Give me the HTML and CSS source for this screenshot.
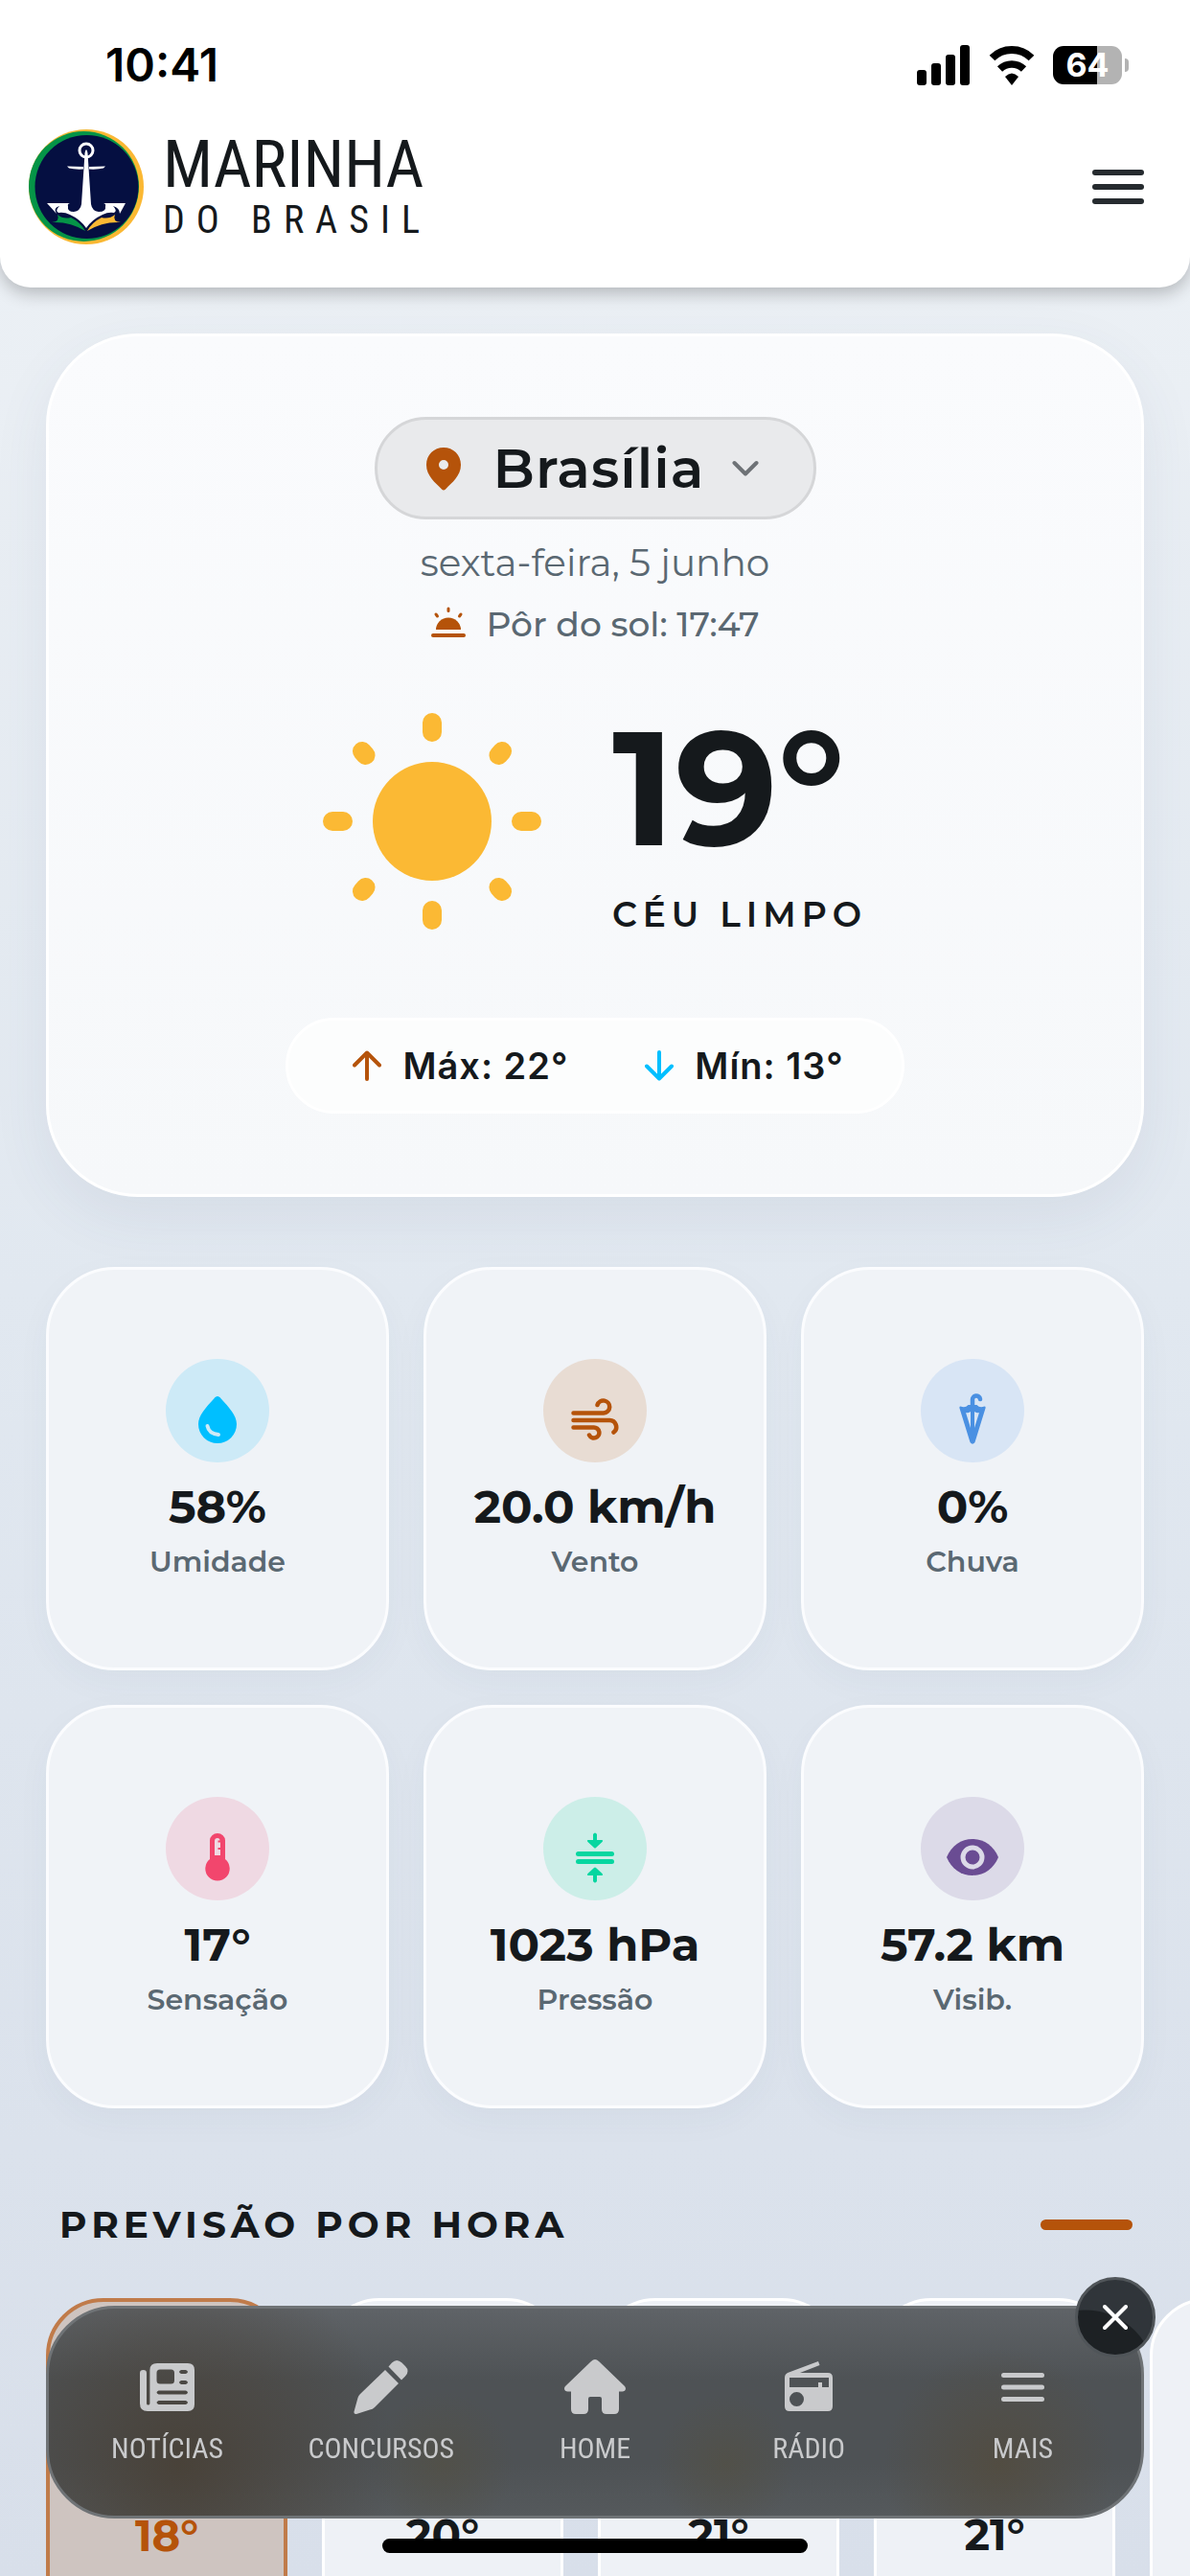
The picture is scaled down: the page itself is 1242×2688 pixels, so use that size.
FILE: index.html
```html
<!DOCTYPE html>
<html lang="pt-BR">
<head>
    <meta charset="UTF-8">
    <meta name="viewport" content="width=device-width, initial-scale=1.0">
    <title>Marinha do Brasil</title>
    <link rel="stylesheet" href="styles.css">
</head>
<body>
    <header class="header">
        <div class="status-bar">
            <span class="clock">10:41</span>
            <div class="status-icons">
                <svg width="56" height="42" viewBox="0 0 56 42">
                    <rect x="0" y="26" width="10" height="16" rx="3"/>
                    <rect x="15" y="19" width="10" height="23" rx="3"/>
                    <rect x="30" y="10" width="10" height="32" rx="3"/>
                    <rect x="45" y="0" width="10" height="42" rx="3"/>
                </svg>
                <svg width="48" height="42" viewBox="0 0 48 42">
                    <path d="M3.500 13.500a29 29 0 0 1 41 0" fill="none" stroke="#000" stroke-width="8"/>
                    <path d="M11.500 25a18 18 0 0 1 25 0" fill="none" stroke="#000" stroke-width="7.500"/>
                    <path d="M24 42l-7-9q7-7 14 0z"/>
                </svg>
                <span class="battery">64</span>
            </div>
        </div>
        <div class="top-bar">
            <a class="brand" href="#">
                <svg width="120" height="120" viewBox="10 10 120 120">
                    <circle cx="70" cy="70" r="60" fill="#fbb833"/>
                    <circle cx="67.500" cy="69.500" r="57.500" fill="#059447"/>
                    <circle cx="70.500" cy="70" r="54" fill="#050f41"/>
                    <circle cx="70" cy="32" r="7" fill="none" stroke="#fff" stroke-width="3"/>
                    <path d="M50 48.500l17 .5v2.500q-9 .5-15-1zM90 48.500l-17 .5v2.500q9 .5 15-1z" fill="#fff"/>
                    <path d="M70 31q1.200 1 1.500 4L75 88q1 7 8 8 8 0 7-6 1-2-2-3h23l-6 11q0-6-7-8 5 5 1 7-6-1-12 2-11 5-17 14-6-9-17-14-6-3-12-2-4-2 1-7-7 2-3 8L29 87h24q-3 1-2 3-1 6 6 6 7-1 8-8l3.500-53q.3-3 1.500-4z" fill="#fff"/>
                    <path d="M34 107q9-1 6-8 6 5 14 3 10 5 15 14-16-10-35-9z" fill="#059447"/>
                    <path d="M106 107q-9-1-6-8-6 5-14 3-10 5-15 14 16-10 35-9z" fill="#fbb833"/>
                </svg>
                <span class="brand-text">
                    <span class="brand-name">MARINHA</span>
                    <span class="brand-sub">DO BRASIL</span>
                </span>
            </a>
            <button class="menu-btn" type="button" aria-label="Menu">
                <svg width="54" height="36" viewBox="0 0 54 36" fill="#262b2f">
                    <rect width="54" height="6" rx="3"/>
                    <rect y="15" width="54" height="6" rx="3"/>
                    <rect y="30" width="54" height="6" rx="3"/>
                </svg>
            </button>
        </div>
    </header>

    <main class="content">
        <section class="current">
            <label class="city">
                <svg width="36" height="46" viewBox="0 0 36 46">
                    <path d="M18 1C8 1 0 8.500 0 19c0 12 10 19 16 25.500q2 2 4 0C26 38 36 31 36 19 36 8.500 28 1 18 1zm0 13a5 5 0 1 1 0 10 5 5 0 0 1 0-10z" fill="#b5530a"/>
                </svg>
                <select class="city-select" aria-label="Cidade">
                    <option>Brasília</option>
                </select>
                <svg class="city-arrow" width="28" height="18" viewBox="0 0 28 18">
                    <path d="M2.500 3L14 14.500 25.500 3" fill="none" stroke="#6e7276" stroke-width="4" stroke-linecap="round" stroke-linejoin="round"/>
                </svg>
            </label>
            <p class="date">sexta-feira, 5 junho</p>
            <p class="sunset">
                <svg width="36" height="36" viewBox="0 0 36 36" fill="#b5530a">
                    <path d="M5 24a13 12.500 0 0 1 26 0z"/>
                    <rect x="0" y="28" width="36" height="4" rx="2"/>
                    <path d="M18 2v2.500M5 8l1.500 2M31 8l-1.500 2" stroke="#b5530a" stroke-width="3" stroke-linecap="round"/>
                </svg>
                Pôr do sol: 17:47
            </p>
            <div class="weather">
                <svg width="228" height="228" viewBox="0 0 228 228">
                    <circle cx="114" cy="114" r="62" fill="#fbb934"/>
                    <path d="M114 11v10M114 207v10M10 114h11M207 114h11M41 41l3.500 4M187 41l-3.500 4M41 187l3.500-4M187 187l-3.500-4" stroke="#fbb934" stroke-width="20" stroke-linecap="round"/>
                </svg>
                <div>
                    <div class="temperature">19°</div>
                    <div class="condition">CÉU LIMPO</div>
                </div>
            </div>
            <div class="range">
                <span class="range-item">
                    <svg width="30" height="32" viewBox="0 0 30 32">
                        <path d="M15 30V3M2 15.500L15 2.500l13 13" fill="none" stroke="#b5530a" stroke-width="4" stroke-linecap="round" stroke-linejoin="round"/>
                    </svg>
                    Máx: 22°
                </span>
                <span class="range-item">
                    <svg width="30" height="32" viewBox="0 0 30 32">
                        <path d="M15 2v27M2 16.500l13 13 13-13" fill="none" stroke="#00bfff" stroke-width="4" stroke-linecap="round" stroke-linejoin="round"/>
                    </svg>
                    Mín: 13°
                </span>
            </div>
        </section>

        <section class="details">
            <div class="tile">
                <div class="tile-icon humidity">
                    <svg width="40" height="49" viewBox="0 0 40 49">
                        <path d="M20 0c-1.500 0-2.500 1-3.500 2.200C8 11.500 0 20 0 29a20 20 0 0 0 40 0c0-9-8-17.500-16.500-26.800C22.500 1 21.500 0 20 0z" fill="#00bfff"/>
                        <path d="M9.500 31q1.500 8 11.500 9" fill="none" stroke="#cdeaf7" stroke-width="4" stroke-linecap="round"/>
                    </svg>
                </div>
                <div class="tile-value">58%</div>
                <div class="tile-label">Umidade</div>
            </div>
            <div class="tile">
                <div class="tile-icon wind">
                    <svg width="50" height="44" viewBox="0 0 50 44">
                        <path d="M2.500 15.500H34a6.500 6.500 0 1 0-6.500-8.500M2.500 23H40a7 7 0 0 1 4.500 12.500M2.500 30.500h21a5.500 5.500 0 1 1-4.500 8" fill="none" stroke="#b5530a" stroke-width="4.500" stroke-linecap="round"/>
                    </svg>
                </div>
                <div class="tile-value">20.0 km/h</div>
                <div class="tile-label">Vento</div>
            </div>
            <div class="tile">
                <div class="tile-icon rain">
                    <svg width="28" height="54" viewBox="0 0 28 54">
                        <path d="M1.500 13.500q5 2 8-1.500h9q3 3.500 8 1.500 1.500 0 1 2l-11 35.500q-2.500 3.500-5 0L.5 15.500q-.5-2 1-2zM7 20l5 16V19q-3 2-5 1zM21 20l-5 16V19q3 2 5 1z" fill="#4a90e2" fill-rule="evenodd"/>
                        <path d="M14 14V7a4 4 0 0 1 8-1" fill="none" stroke="#4a90e2" stroke-width="4.500" stroke-linecap="round"/>
                    </svg>
                </div>
                <div class="tile-value">0%</div>
                <div class="tile-label">Chuva</div>
            </div>
            <div class="tile">
                <div class="tile-icon feels">
                    <svg width="26" height="50" viewBox="0 0 26 50">
                        <path d="M5 27V7.500a8 7.500 0 0 1 16 0V27a12.700 12.700 0 1 1-16 0z" fill="#f2466d"/>
                        <path d="M10 23V8q0-3 3-3 2.500 0 2.500 2.500H13.500v2h2.500V15h-2.500v2H16v6z" fill="#efd9e3"/>
                    </svg>
                </div>
                <div class="tile-value">17°</div>
                <div class="tile-label">Sensação</div>
            </div>
            <div class="tile">
                <div class="tile-icon pressure">
                    <svg width="40" height="53" viewBox="0 0 40 53" fill="#06d6a0">
                        <rect y="20" width="40" height="5" rx="2.500"/>
                        <rect y="28" width="40" height="5" rx="2.500"/>
                        <path d="M18 2q2-3 4 0v6h5q2 0 .5 2L21 16q-1 1-2 0l-6.500-6q-1.500-2 .5-2h5zM18 51q2 3 4 0v-6h5q2 0 .5-2L21 37q-1-1-2 0l-6.500 6q-1.500 2 .5 2h5z"/>
                    </svg>
                </div>
                <div class="tile-value">1023 hPa</div>
                <div class="tile-label">Pressão</div>
            </div>
            <div class="tile">
                <div class="tile-icon visibility">
                    <svg width="54" height="38" viewBox="0 0 54 38">
                        <path d="M0 19C5 7 15 0 27 0s22 7 27 19c-5 12-15 19-27 19S5 31 0 19z" fill="#6a4c93"/>
                        <circle cx="27" cy="19" r="10" fill="#6a4c93" stroke="#dcdae8" stroke-width="5"/>
                    </svg>
                </div>
                <div class="tile-value">57.2 km</div>
                <div class="tile-label">Visib.</div>
            </div>
        </section>

        <section>
            <div class="section-title">
                <h2>PREVISÃO POR HORA</h2>
                <span class="accent"></span>
            </div>
            <div class="hours">
                <div class="hour active">18°</div>
                <div class="hour">20°</div>
                <div class="hour">21°</div>
                <div class="hour">21°</div>
                <div class="hour"></div>
            </div>
        </section>
    </main>

    <nav class="bottom-nav">
        <a class="nav-item" href="#">
            <svg width="58" height="60" viewBox="0 -5 58 60">
                <path d="M18 0h32q7 0 7 7v36q0 7-7 7H8q-8 0-8-8V10q0-3 3.500-3T7 10v32q0 1.500 1.700 1.500t1.700-1.500V7q0-7 7.600-7zm3 6.500q-3.500 0-3.500 3.500v8q0 3.500 3.500 3.500h11.500q3.500 0 3.500-3.500v-8q0-3.500-3.500-3.500zM43 7q-4 2 0 4h5q4-2 0-4zM43 18q-4 2 0 4h5q4-2 0-4zM19.500 28.500q-4 2 0 4H48q4-2 0-4zM19.500 39q-4 2 0 4H48q4-2 0-4z" fill-rule="evenodd"/>
            </svg>
            NOTÍCIAS
        </a>
        <a class="nav-item" href="#">
            <svg width="58" height="60" viewBox="0 -1 58 60">
                <path d="M33 11l14 14-25 25q-2 2-5 2.500L3 57q-3 .5-2.500-2.500l4-14.500q.5-2 2.500-4zM36.500 7.500L40 3.500q5-5 10.500 0L54 7q5 5 0 10.500l-4 4z"/>
            </svg>
            CONCURSOS
        </a>
        <a class="nav-item" href="#">
            <svg width="64" height="60" viewBox="0 -1 64 60">
                <path d="M32 0q2 0 4 2l26.500 25.500c3 3 1 6-2 6H57V52q0 5-5 5h-8q-5 0-5-5V41q0-2-2-2H27q-2 0-2 2v11q0 5-5 5h-8q-5 0-5-5V33.500H3.500c-3 0-5-3-2-6L28 2q2-2 4-2z"/>
            </svg>
            HOME
        </a>
        <a class="nav-item" href="#">
            <svg width="50" height="60" viewBox="0 -3 50 60">
                <path d="M35 0l1.500 4L16 12h29q5 0 5 5v30q0 5-5 5H5q-5 0-5-5V17q0-3.500 3-5zM5 17v10h30v-5h4v5h7V17zM12.500 32a7.500 7.500 0 1 0 0 15 7.500 7.500 0 0 0 0-15z" fill-rule="evenodd"/>
            </svg>
            RÁDIO
        </a>
        <a class="nav-item" href="#">
            <svg width="45" height="60" viewBox="0 -15 45 60">
                <rect width="45" height="5" rx="2.500"/>
                <rect y="12.500" width="45" height="5" rx="2.500"/>
                <rect y="25" width="45" height="5" rx="2.500"/>
            </svg>
            MAIS
        </a>
        <button class="close-btn" type="button" aria-label="Fechar">
            <svg width="26" height="26" viewBox="0 0 26 26">
                <path d="M2 2l22 22M24 2L2 24" stroke="#fff" stroke-width="4" stroke-linecap="round"/>
            </svg>
        </button>
    </nav>
    <div class="home-indicator"></div>
</body>
</html>
```
FILE: styles.css
```css
* {
    box-sizing: border-box;
}
body {
    display: flex;
    flex-direction: column;
    margin: 0;
    height: 100vh;
    overflow: hidden;
    font-family: Montserrat, Inter, sans-serif;
    color: #15191c;
    background: linear-gradient(180deg, #eef2f6 0%, #e1e8f0 50%, #d8dfea 100%);
}
svg {
    display: block;
    flex: none;
}
p, h2 {
    margin: 0;
}
a {
    text-decoration: none;
    color: inherit;
}

/* Header */
.header {
    flex: none;
    position: relative;
    height: 300px;
    background: #fff;
    border-radius: 0 0 32px 32px;
    box-shadow: 0 6px 18px rgba(0, 0, 0, 0.24);
}
.status-bar {
    display: flex;
    justify-content: space-between;
    align-items: center;
    height: 135px;
    padding: 0 64px 0 110px;
    font-family: Inter, sans-serif;
    color: #000;
}
.clock {
    font-size: 48px;
    font-weight: 600;
}
.status-icons {
    display: flex;
    align-items: center;
    gap: 19px;
}
.battery {
    position: relative;
    width: 72px;
    height: 40px;
    margin-right: 7px;
    border-radius: 11px;
    background: linear-gradient(90deg, #000 64%, #b3b3b3 64%);
    color: #fff;
    font-size: 34px;
    font-weight: 700;
    line-height: 40px;
    text-align: center;
}
.battery::after {
    content: "";
    position: absolute;
    right: -7px;
    top: 13px;
    width: 4px;
    height: 14px;
    border-radius: 0 4px 4px 0;
    background: #b3b3b3;
}
.top-bar {
    display: flex;
    justify-content: space-between;
    align-items: center;
    padding: 0 48px 0 30px;
}
.brand {
    display: flex;
    align-items: center;
    gap: 20px;
    font-family: "Roboto Condensed", Roboto, sans-serif;
}
.brand-text {
    display: flex;
    flex-direction: column;
}
.brand-name {
    font-size: 69px;
    line-height: 70px;
}
.brand-sub {
    font-size: 40px;
    line-height: 46px;
    letter-spacing: 12px;
}
.menu-btn {
    padding: 0;
    border: none;
    background: none;
    cursor: pointer;
}

/* Current weather */
.content {
    flex: 1;
    min-height: 0;
    overflow: hidden;
    padding: 48px 48px 0;
}
.current {
    display: flex;
    flex-direction: column;
    align-items: center;
    height: 901px;
    padding: 84px 0;
    border: 3px solid #fff;
    border-radius: 96px;
    background: linear-gradient(180deg, #fafbfd, #f6f8fa);
    box-shadow: 0 20px 60px rgba(60, 80, 110, 0.08);
}
.city {
    display: flex;
    align-items: center;
    height: 110px;
    padding: 0 57px 0 51px;
    border: 3px solid #d5d6d8;
    border-radius: 55px;
    background: #e9eaec;
}
.city-select {
    margin: 0 28px 0 34px;
    padding: 0;
    border: none;
    background: none;
    appearance: none;
    font-family: inherit;
    font-size: 57px;
    font-weight: 600;
    letter-spacing: 1px;
    color: inherit;
}
.date {
    margin-top: 18px;
    font-size: 39px;
    line-height: 54px;
    color: #5a6872;
}
.sunset {
    display: flex;
    align-items: center;
    gap: 22px;
    margin-top: 12px;
    font-size: 36px;
    line-height: 50px;
    font-weight: 500;
    color: #5a6872;
}
.weather {
    display: flex;
    align-items: center;
    gap: 74px;
    margin-top: 62px;
}
.temperature {
    font-size: 168px;
    line-height: 168px;
    font-weight: 700;
}
.condition {
    margin-top: 26px;
    font-size: 36px;
    line-height: 44px;
    font-weight: 600;
    letter-spacing: 6px;
}
.range {
    display: flex;
    align-items: center;
    gap: 80px;
    height: 102px;
    margin-top: 86px;
    padding: 0 60px 0 67px;
    border: 3px solid #fff;
    border-radius: 51px;
    background: #fcfdfd;
}
.range-item {
    display: flex;
    align-items: center;
    gap: 22px;
    font-family: Inter, sans-serif;
    font-size: 38px;
    font-weight: 600;
    letter-spacing: 1px;
}

/* Detail tiles */
.details {
    display: grid;
    grid-template-columns: repeat(3, 1fr);
    gap: 36px;
    margin-top: 73px;
}
.tile {
    display: flex;
    flex-direction: column;
    align-items: center;
    height: 421px;
    padding-top: 93px;
    border: 3px solid #fbfcfe;
    border-radius: 72px;
    background: #f0f3f7;
    box-shadow: 0 12px 36px rgba(60, 80, 110, 0.04);
}
.tile-icon {
    display: flex;
    justify-content: center;
    align-items: center;
    width: 108px;
    height: 108px;
    padding-top: 18px;
    border-radius: 50%;
}
.humidity {
    background: #cdeaf7;
}
.wind {
    background: #e8dcd3;
}
.rain {
    background: #d8e5f5;
}
.feels {
    background: #efd9e3;
}
.pressure {
    background: #cceee8;
}
.visibility {
    background: #dcdae8;
}
.tile-value {
    margin-top: 16px;
    font-size: 48px;
    line-height: 60px;
    font-weight: 700;
}
.tile-label {
    margin-top: 8px;
    font-size: 30px;
    line-height: 40px;
    font-weight: 600;
    color: #5a6872;
}

/* Hourly forecast */
.section-title {
    display: flex;
    justify-content: space-between;
    align-items: center;
    margin-top: 96px;
    padding: 0 12px 0 14px;
}
.section-title h2 {
    font-size: 39px;
    line-height: 50px;
    font-weight: 700;
    letter-spacing: 5px;
}
.accent {
    width: 96px;
    height: 11px;
    border-radius: 6px;
    background: #b5530a;
}
.hours {
    display: flex;
    gap: 36px;
    margin: 52px -48px 0 0;
    overflow: hidden;
}
.hour {
    flex: none;
    width: 252px;
    height: 400px;
    padding-top: 217px;
    border: 3px solid #fff;
    border-radius: 60px;
    background: #eef1f6;
    font-size: 45px;
    line-height: 54px;
    font-weight: 700;
    text-align: center;
}
.hour.active {
    border: 4px solid #c07b4a;
    background: #cec4c0;
    color: #b5530a;
}

/* Bottom navigation */
.bottom-nav {
    position: fixed;
    left: 48px;
    right: 48px;
    bottom: 60px;
    display: flex;
    align-items: center;
    height: 222px;
    padding: 0 12px;
    border: 3px solid #6f7376;
    border-radius: 72px;
    background:
        radial-gradient(circle at 12% 75%, rgba(72, 64, 54, 0.9), rgba(72, 64, 54, 0) 22%),
        radial-gradient(circle at 36% 75%, rgba(82, 80, 70, 0.8), rgba(82, 80, 70, 0) 10%),
        radial-gradient(circle at 62% 75%, rgba(82, 80, 70, 0.8), rgba(82, 80, 70, 0) 10%),
        radial-gradient(circle at 87% 75%, rgba(82, 76, 64, 0.9), rgba(82, 76, 64, 0) 12%),
        linear-gradient(180deg, #5f6367 0%, #4e5255 35%, #4e5255 75%, #55595c 100%);
}
.nav-item {
    flex: 1;
    display: flex;
    flex-direction: column;
    align-items: center;
    gap: 16px;
    font-family: "Roboto Condensed", Roboto, sans-serif;
    font-size: 30px;
    line-height: 36px;
    color: #c9cacc;
    fill: #c9cacc;
}
.close-btn {
    position: absolute;
    top: -33px;
    right: -15px;
    display: flex;
    justify-content: center;
    align-items: center;
    width: 84px;
    height: 84px;
    padding: 0;
    border: 3px solid #505559;
    border-radius: 50%;
    background: radial-gradient(circle at 8px 104px, #1d2124 72px, #30353a 73px);
    cursor: pointer;
}
.home-indicator {
    position: fixed;
    left: 50%;
    bottom: 24px;
    width: 444px;
    height: 15px;
    margin-left: -222px;
    border-radius: 8px;
    background: #000;
}
```
